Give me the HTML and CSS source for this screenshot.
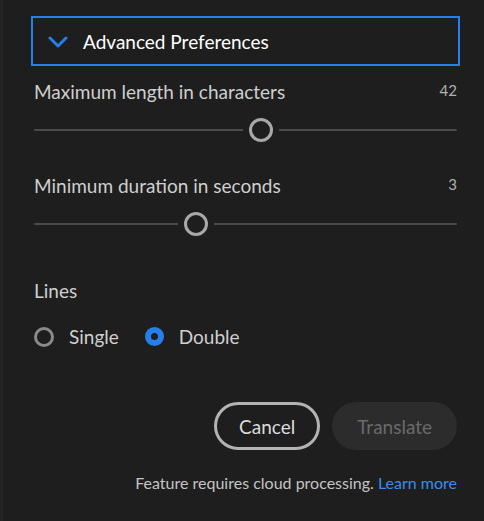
FILE: index.html
```html
<!DOCTYPE html>
<html lang="en">
<head>
    <meta charset="UTF-8">
    <meta name="viewport" content="width=device-width, initial-scale=1.0">
    <title>Advanced Preferences</title>
    <link rel="stylesheet" href="styles.css">
</head>
<body>
    <div class="panel">
        <button class="disclosure">
            <svg class="chevron" width="20" height="12" viewBox="0 0 20 12">
                <path d="M2 2 L10 10 L18 2" fill="none" stroke="#2680eb" stroke-width="3" stroke-linecap="round" stroke-linejoin="round"/>
            </svg>
            <span>Advanced Preferences</span>
        </button>

        <div class="field">
            <div class="field-head">
                <span class="label">Maximum length in characters</span>
                <span class="value">42</span>
            </div>
            <div class="slider">
                <div class="track"></div>
                <div class="thumb" style="left: 53.7%"></div>
            </div>
        </div>

        <div class="field">
            <div class="field-head">
                <span class="label">Minimum duration in seconds</span>
                <span class="value">3</span>
            </div>
            <div class="slider">
                <div class="track"></div>
                <div class="thumb" style="left: 38.3%"></div>
            </div>
        </div>

        <div class="lines">
            <div class="label">Lines</div>
            <div class="radios">
                <label class="radio"><span class="dot"></span>Single</label>
                <label class="radio checked"><span class="dot"></span>Double</label>
            </div>
        </div>

        <div class="actions">
            <button class="btn btn-outline">Cancel</button>
            <button class="btn btn-disabled" disabled>Translate</button>
        </div>

        <p class="note">Feature requires cloud processing. <a href="#">Learn more</a></p>
    </div>
</body>
</html>
```

FILE: styles.css
```css
body {
    margin: 0;
    background-color: #1e1e1e;
    font-family: Lato, "Liberation Sans", sans-serif;
    color: #cfcfcf;
    height: 521px;
    border-left: 3px solid #242424;
    box-sizing: border-box;
}
.panel {
    padding: 16px 27px 0 31px;
}
.disclosure {
    display: flex;
    align-items: center;
    gap: 15px;
    width: calc(100% + 6px);
    height: 50px;
    margin-left: -3px;
    padding: 0 0 0 15px;
    background: transparent;
    border: 2px solid #2680eb;
    color: #ffffff;
    font-family: inherit;
    font-size: 19px;
    font-weight: normal;
    text-align: left;
}
.chevron {
    margin-top: 1px;
}
.field {
    margin-top: 14px;
}
.field + .field {
    margin-top: 32px;
}
.field-head {
    display: flex;
    justify-content: space-between;
    align-items: flex-start;
}
.label {
    font-size: 19px;
    line-height: 24px;
    color: #cfcfcf;
}
.value {
    font-size: 15px;
    line-height: 20px;
    color: #b0b0b0;
}
.slider {
    position: relative;
    height: 24px;
    margin-top: 14px;
}
.track {
    position: absolute;
    left: 0;
    right: 0;
    top: 11px;
    height: 2px;
    background: #4b4b4b;
    border-radius: 1px;
}
.thumb {
    position: absolute;
    top: 0;
    width: 18px;
    height: 18px;
    margin-left: -12px;
    border: 3px solid #a8a8a8;
    border-radius: 50%;
    background: #1e1e1e;
    box-shadow: 0 0 0 6px #1e1e1e;
}
.lines {
    margin-top: 43px;
}
.radios {
    display: flex;
    gap: 26px;
    margin-top: 22px;
}
.radio {
    display: flex;
    align-items: center;
    gap: 15px;
    font-size: 19px;
    color: #cfcfcf;
}
.dot {
    width: 14px;
    height: 14px;
    border: 3px solid #8a8a8a;
    border-radius: 50%;
}
.radio.checked .dot {
    width: 7px;
    height: 7px;
    border: 6.5px solid #2680eb;
    background: #1e1e1e;
}
.actions {
    display: flex;
    justify-content: flex-end;
    gap: 12px;
    margin-top: 54px;
}
.btn {
    height: 48px;
    padding: 0 22px;
    border-radius: 24px;
    font-family: inherit;
    font-size: 19px;
}
.btn-outline {
    background: transparent;
    border: 3px solid #b3b3b3;
    color: #dcdcdc;
}
.btn-disabled {
    background: #2c2c2c;
    border: 3px solid #2c2c2c;
    color: #6a6a6a;
    padding: 0 22px;
}
.note {
    margin: 23px 0 0;
    text-align: right;
    font-size: 16px;
    color: #c4c4c4;
}
.note a {
    color: #378ef0;
    text-decoration: none;
}
```
